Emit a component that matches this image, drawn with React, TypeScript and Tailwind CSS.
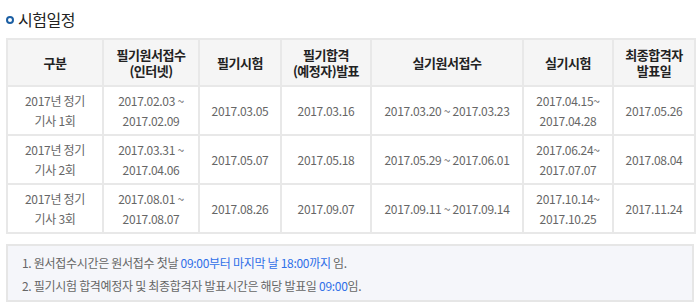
import React from "react";

const rows = [
  ["2017년 정기\n기사 1회", "2017.02.03 ~\n2017.02.09", "2017.03.05", "2017.03.16", "2017.03.20 ~ 2017.03.23", "2017.04.15~\n2017.04.28", "2017.05.26"],
  ["2017년 정기\n기사 2회", "2017.03.31 ~\n2017.04.06", "2017.05.07", "2017.05.18", "2017.05.29 ~ 2017.06.01", "2017.06.24~\n2017.07.07", "2017.08.04"],
  ["2017년 정기\n기사 3회", "2017.08.01 ~\n2017.08.07", "2017.08.26", "2017.09.07", "2017.09.11 ~ 2017.09.14", "2017.10.14~\n2017.10.25", "2017.11.24"],
];

const headers = ["구분", "필기원서접수\n(인터넷)", "필기시험", "필기합격\n(예정자)발표", "실기원서접수", "실기시험", "최종합격자\n발표일"];
const widths = ["w-[96px]", "w-[96px]", "w-[82px]", "w-[90px]", "w-[152px]", "w-[90px]", "w-[82px]"];

function Lines({ text }: { text: string }) {
  const parts = text.split("\n");
  return (
    <>
      {parts.map((p, i) => (
        <React.Fragment key={i}>
          {i > 0 && <br />}
          {p}
        </React.Fragment>
      ))}
    </>
  );
}

export default function App() {
  return (
    <div className="w-[700px] h-[306px] bg-white px-[6px] pt-[9px]" style={{ fontFamily: '"Noto Sans CJK KR", "Noto Sans", sans-serif' }}>
      <div className="flex items-center h-[20px] gap-[4px]">
        <span className="w-[8px] h-[8px] rounded-full border-[2px] border-[#1b5fa3] mt-[1px]" />
        <span className="text-[16px] text-[#222] tracking-[-0.5px] leading-[20px]">시험일정</span>
      </div>
      <table className="mt-[9px] w-[688px] border-collapse table-fixed">
        <colgroup>
          {widths.map((w, i) => (
            <col key={i} className={w} />
          ))}
        </colgroup>
        <thead>
          <tr className="h-[47px] bg-[#f5f5f5]">
            {headers.map((h, i) => (
              <th key={i} className="border-[2px] border-[#e8e8e8] text-[13px] font-bold text-[#222] leading-[16px] tracking-[-0.5px] text-center align-middle p-0">
                <Lines text={h} />
              </th>
            ))}
          </tr>
        </thead>
        <tbody>
          {rows.map((r, ri) => (
            <tr key={ri} className="h-[49px]">
              {r.map((c, ci) => (
                <td key={ci} className="border-[2px] border-[#e8e8e8] text-[12px] text-[#666] leading-[20px] tracking-[-0.3px] text-center align-middle p-0">
                  <Lines text={c} />
                </td>
              ))}
            </tr>
          ))}
        </tbody>
      </table>
      <div className="mt-[10px] w-[688px] h-[58px] bg-[#f5f6fa] border-[2px] border-[#e6e6e6] px-[14px] pt-[5px] text-[12px] text-[#666] leading-[23px] tracking-[-0.3px]">
        <div>
          1. 원서접수시간은 원서접수 첫날 <span className="text-[#2f6fe8]">09:00부터 마지막 날 18:00까지</span> 임.
        </div>
        <div>
          2. 필기시험 합격예정자 및 최종합격자 발표시간은 해당 발표일 <span className="text-[#2f6fe8]">09:00</span>임.
        </div>
      </div>
    </div>
  );
}
